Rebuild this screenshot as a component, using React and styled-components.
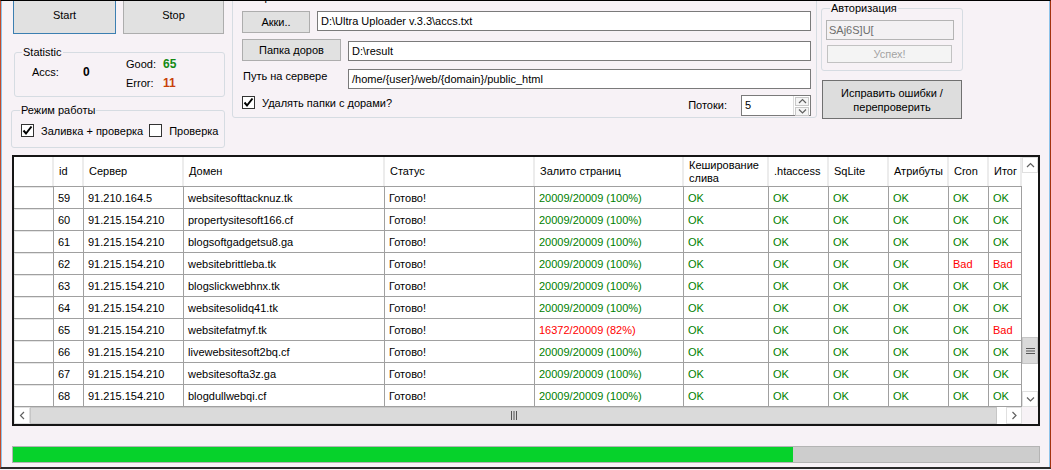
import React from "react"
import styled, { createGlobalStyle } from "styled-components"

const BG = "#f7f2f6"
const GRID_LINE = "#a0a0a0"

const GlobalStyle = createGlobalStyle`
  html, body {
    margin: 0;
    padding: 0;
    background: ${BG};
    overflow: hidden;
  }
  body {
    font-family: "Liberation Sans", Arial, sans-serif;
    font-size: 11px;
    color: #000;
  }
  * {
    box-sizing: border-box;
  }
`

const columns = [
  { key: "rh", title: "", width: 40 },
  { key: "id", title: "id", width: 30 },
  { key: "server", title: "Сервер", width: 100 },
  { key: "domain", title: "Домен", width: 201 },
  { key: "status", title: "Статус", width: 150 },
  { key: "pages", title: "Залито страниц", width: 149 },
  { key: "cache", title: "Кеширование слива", width: 85 },
  { key: "htaccess", title: ".htaccess", width: 60 },
  { key: "sqlite", title: "SqLite", width: 60 },
  { key: "attrs", title: "Атрибуты", width: 60 },
  { key: "cron", title: "Cron", width: 40 },
  { key: "total", title: "Итог", width: 33 },
]

const template = columns.map((c) => `${c.width}px`).join(" ")

const rows = [
  { id: "59", server: "91.210.164.5", domain: "websitesofttacknuz.tk" },
  { id: "60", server: "91.215.154.210", domain: "propertysitesoft166.cf" },
  { id: "61", server: "91.215.154.210", domain: "blogsoftgadgetsu8.ga" },
  { id: "62", server: "91.215.154.210", domain: "websitebrittleba.tk", cron: false, total: false },
  { id: "63", server: "91.215.154.210", domain: "blogslickwebhnx.tk" },
  { id: "64", server: "91.215.154.210", domain: "websitesolidq41.tk" },
  { id: "65", server: "91.215.154.210", domain: "websitefatmyf.tk", pages: 16372, total: false },
  { id: "66", server: "91.215.154.210", domain: "livewebsitesoft2bq.cf" },
  { id: "67", server: "91.215.154.210", domain: "websitesofta3z.ga" },
  { id: "68", server: "91.215.154.210", domain: "blogdullwebqi.cf" },
]

const PAGES_TOTAL = 20009
const progress = 76

export default function App() {
  return (
    <>
      <GlobalStyle />
      <Frame>
        <Window>
          <TopArea>
            <LeftCol>
              <ButtonRow>
                <Button $w={103} $h={38} $focused>Start</Button>
                <Button $w={101} $h={38}>Stop</Button>
              </ButtonRow>
              <StatGroup>
                <Legend $left={7}>Statistic</Legend>
                <StatGrid>
                  <AccsLabel>Accs:</AccsLabel>
                  <AccsValue>0</AccsValue>
                  <span>Good:</span>
                  <Num $color="#138a13">65</Num>
                  <span>Error:</span>
                  <Num $color="#c8400a">11</Num>
                </StatGrid>
              </StatGroup>
              <ModeGroup>
                <Legend $left={8}>Режим работы</Legend>
                <ModeRow>
                  <Check checked label="Заливка + проверка" />
                  <Check label="Проверка" />
                </ModeRow>
              </ModeGroup>
            </LeftCol>

            <SettingsGroup>
              <Legend $left={6}>Настройки</Legend>
              <FieldRow $h={22}>
                <Button $w={68} $h={22}>Акки..</Button>
                <TextBox $gap={7} $h={20}>D:\Ultra Uploader v.3.3\accs.txt</TextBox>
              </FieldRow>
              <FieldRow $h={22} $mt={6}>
                <Button $w={99} $h={22}>Папка доров</Button>
                <TextBox $gap={7} $h={20} $mt={2}>D:\result</TextBox>
              </FieldRow>
              <FieldRow $h={20} $mt={8}>
                <FieldLabel>Путь на сервере</FieldLabel>
                <TextBox $h={20}>/home/{"{user}"}/web/{"{domain}"}/public_html</TextBox>
              </FieldRow>
              <FieldRow $h={21} $mt={6}>
                <CheckSlot>
                  <Check checked label="Удалять папки с дорами?" />
                </CheckSlot>
                <ThreadsLabel>Потоки:</ThreadsLabel>
                <Spin>
                  <SpinValue>5</SpinValue>
                  <SpinButtons>
                    <SpinBtn>
                      <Chevron dir="up" />
                    </SpinBtn>
                    <SpinBtn>
                      <Chevron dir="down" />
                    </SpinBtn>
                  </SpinButtons>
                </Spin>
              </FieldRow>
            </SettingsGroup>

            <RightCol>
              <AuthGroup>
                <Legend $left={8}>Авторизация</Legend>
                <AuthBox>SAj6S]U[</AuthBox>
                <Button $w={125} $h={18} $disabled>Успех!</Button>
              </AuthGroup>
              <FixButton>
                Исправить ошибки /
                <br />
                перепроверить
              </FixButton>
            </RightCol>
          </TopArea>

          <Table>
            <TableBody>
              <Grid>
                <HeaderRow>
                  {columns.map((c) => (
                    <HeaderCell key={c.key}>{c.title}</HeaderCell>
                  ))}
                </HeaderRow>
                {rows.map((r) => {
                  const pages = r.pages ?? PAGES_TOTAL
                  const pct = Math.round((pages / PAGES_TOTAL) * 100)
                  const flag = (v) => (v === false ? "bad" : "ok")
                  return (
                    <DataRow key={r.id}>
                      <RowHead />
                      <Cell>{r.id}</Cell>
                      <Cell>{r.server}</Cell>
                      <Cell>{r.domain}</Cell>
                      <Cell>Готово!</Cell>
                      <Cell $tone={pct < 100 ? "bad" : "ok"}>
                        {pages}/{PAGES_TOTAL} ({pct}%)
                      </Cell>
                      <Cell $tone="ok">OK</Cell>
                      <Cell $tone="ok">OK</Cell>
                      <Cell $tone="ok">OK</Cell>
                      <Cell $tone="ok">OK</Cell>
                      <Cell $tone={flag(r.cron)}>{r.cron === false ? "Bad" : "OK"}</Cell>
                      <Cell $tone={flag(r.total)}>{r.total === false ? "Bad" : "OK"}</Cell>
                    </DataRow>
                  )
                })}
              </Grid>
              <VScroll>
                <ScrollBtn>
                  <Chevron dir="up" />
                </ScrollBtn>
                <VTrack>
                  <VThumb>
                    <svg width="9" height="8" viewBox="0 0 9 8">
                      <path d="M0 1.5h9M0 4h9M0 6.5h9" stroke="#555" strokeWidth="1" />
                    </svg>
                  </VThumb>
                </VTrack>
                <ScrollBtn>
                  <Chevron dir="down" />
                </ScrollBtn>
              </VScroll>
            </TableBody>
            <HScroll>
              <ScrollBtn $wide>
                <Chevron dir="left" />
              </ScrollBtn>
              <HThumb>
                <svg width="8" height="9" viewBox="0 0 8 9">
                  <path d="M1.5 0v9M4 0v9M6.5 0v9" stroke="#555" strokeWidth="1" />
                </svg>
              </HThumb>
              <HTrack />
              <ScrollBtn $wide>
                <Chevron dir="right" />
              </ScrollBtn>
              <Corner />
            </HScroll>
          </Table>

          <Progress>
            <ProgressFill style={{ width: `${progress}%` }} />
          </Progress>
        </Window>
      </Frame>
    </>
  )
}

function Check({ checked, label }) {
  return (
    <CheckItem>
      <CheckBox>
        {checked && (
          <svg width="11" height="11" viewBox="0 0 11 11">
            <path d="M1.5 5.5 L4 8.5 L9.5 1.5" fill="none" stroke="#000" strokeWidth="2" />
          </svg>
        )}
      </CheckBox>
      <CheckLabel>{label}</CheckLabel>
    </CheckItem>
  )
}

function Chevron({ dir }) {
  const paths = {
    up: "M1 5 L4.5 1.5 L8 5",
    down: "M1 1.5 L4.5 5 L8 1.5",
    left: "M5 1 L1.5 4.5 L5 8",
    right: "M1.5 1 L5 4.5 L1.5 8",
  }
  const vertical = dir === "up" || dir === "down"
  return (
    <svg
      width={vertical ? 9 : 7}
      height={vertical ? 7 : 9}
      viewBox={vertical ? "0 0 9 7" : "0 0 7 9"}
    >
      <path d={paths[dir]} fill="none" stroke="#606060" strokeWidth="1.2" />
    </svg>
  )
}

const Frame = styled.div`
  width: 1051px;
  height: 469px;
  border-top: 1px solid #000;
  border-left: 1px solid #c44b2a;
  border-right: 1px solid #a3320f;
  border-bottom: 2px solid #2b2b2b;
`

const Window = styled.div`
  height: 100%;
  display: flex;
  flex-direction: column;
  overflow: hidden;
  background: ${BG};
  border-left: 1px solid #8ec3ea;
  border-right: 1px solid #8ec3ea;
`

const TopArea = styled.div`
  display: flex;
  align-items: flex-start;
`

const LeftCol = styled.div`
  width: 214px;
  margin-left: 9px;
  display: flex;
  flex-direction: column;
`

const ButtonRow = styled.div`
  display: flex;
  gap: 7px;
  padding-left: 2px;
  margin-top: -5px;
`

const Button = styled.button`
  width: ${(p) => p.$w}px;
  height: ${(p) => p.$h}px;
  flex: none;
  padding: 0;
  font: inherit;
  color: ${(p) => (p.$disabled ? "#a3a3a3" : "#000")};
  background: ${(p) => (p.$disabled ? "#f4f4f4" : "#e1e1e1")};
  border: 1px solid
    ${(p) => (p.$focused ? "#3c7fb1" : p.$disabled ? "#c2c2c2" : "#adadad")};
  margin-left: ${(p) => (p.$disabled ? 1 : 0)}px;
  margin-top: ${(p) => (p.$disabled ? 5 : 0)}px;
`

const Group = styled.div`
  position: relative;
  border: 1px solid #d6dce2;
  border-radius: 3px;
`

const Legend = styled.span`
  position: absolute;
  top: -7px;
  left: ${(p) => p.$left}px;
  padding: 0 1px;
  line-height: 12px;
  background: ${BG};
  white-space: nowrap;
`

const StatGroup = styled(Group)`
  width: 211px;
  height: 45px;
  margin: 18px 0 0 3px;
`

const StatGrid = styled.div`
  display: grid;
  grid-template-columns: 51px 43px 37px auto;
  grid-template-rows: 19px 19px;
  align-items: center;
  padding: 1px 0 0 17px;
`

const AccsLabel = styled.span`
  grid-row: 1 / span 2;
  margin-bottom: 3px;
`

const Num = styled.span`
  font-weight: bold;
  font-size: 12px;
  color: ${(p) => p.$color};
`

const AccsValue = styled(Num)`
  grid-row: 1 / span 2;
  margin-bottom: 3px;
`

const ModeGroup = styled(Group)`
  width: 214px;
  height: 38px;
  margin-top: 13px;
  padding: 13px 0 0 9px;
`

const ModeRow = styled.div`
  display: flex;
  gap: 4px;
`

const CheckItem = styled.label`
  display: flex;
  align-items: center;
  height: 13px;
`

const CheckBox = styled.span`
  width: 13px;
  height: 13px;
  flex: none;
  display: grid;
  place-items: center;
  background: #fff;
  border: 1px solid #333;
`

const CheckLabel = styled.span`
  margin-left: 7px;
  margin-right: 2px;
  white-space: nowrap;
`

const SettingsGroup = styled(Group)`
  width: 585px;
  height: 121px;
  margin: -4px 0 0 7px;
  padding: 13px 5px 0 9px;
`

const FieldRow = styled.div`
  display: flex;
  align-items: flex-start;
  height: ${(p) => p.$h}px;
  margin-top: ${(p) => p.$mt || 0}px;
`

const TextBox = styled.div`
  flex: 1;
  height: ${(p) => p.$h}px;
  margin-left: ${(p) => p.$gap || 0}px;
  margin-top: ${(p) => p.$mt || 0}px;
  padding-left: 3px;
  line-height: 18px;
  background: #fff;
  border: 1px solid #7a7a7a;
  white-space: nowrap;
`

const FieldLabel = styled.span`
  width: 106px;
  margin-top: 1px;
  padding-left: 1px;
  line-height: 13px;
`

const CheckSlot = styled.div`
  margin-top: 1px;
  flex: 1;
`

const ThreadsLabel = styled.span`
  margin-top: 4px;
  margin-right: 14px;
  line-height: 13px;
`

const Spin = styled.div`
  width: 70px;
  height: 21px;
  display: flex;
  background: #fff;
  border: 1px solid #7a7a7a;
`

const SpinValue = styled.span`
  flex: 1;
  padding-left: 3px;
  line-height: 18px;
`

const SpinButtons = styled.div`
  width: 17px;
  display: flex;
  flex-direction: column;
  border-left: 1px solid #dcdcdc;
`

const SpinBtn = styled.div`
  flex: 1;
  display: grid;
  place-items: center;
  background: #f5f5f5;
  border: 1px solid #c8c8c8;
  margin: 1px 1px 0 1px;
`

const RightCol = styled.div`
  width: 142px;
  margin: 7px 0 0 4px;
  display: flex;
  flex-direction: column;
`

const AuthGroup = styled(Group)`
  width: 142px;
  height: 63px;
  padding: 11px 0 0 4px;
`

const AuthBox = styled.div`
  width: 128px;
  height: 20px;
  padding-left: 2px;
  line-height: 18px;
  color: #6d6d6d;
  background: #f3f1f3;
  border: 1px solid #b4b4b4;
`

const FixButton = styled.button`
  width: 140px;
  height: 39px;
  margin: 9px 0 0 1px;
  padding: 0;
  font: inherit;
  line-height: 14px;
  color: #000;
  background: #dddddd;
  border: 1px solid #707070;
`

const Table = styled.div`
  width: 1028px;
  height: 271px;
  margin: 7px 0 0 10px;
  display: flex;
  flex-direction: column;
  background: #fff;
  border: 2px solid #151515;
`

const TableBody = styled.div`
  display: flex;
  height: 250px;
`

const Grid = styled.div`
  width: 1008px;
  overflow: hidden;
`

const HeaderRow = styled.div`
  display: grid;
  grid-template-columns: ${template};
  height: 30px;
  border-bottom: 1px solid ${GRID_LINE};
`

const HeaderCell = styled.div`
  display: flex;
  align-items: center;
  padding-left: 5px;
  line-height: 13px;
  overflow: hidden;
  background: #fff;
  border-right: 2px solid #ececec;
`

const DataRow = styled.div`
  display: grid;
  grid-template-columns: ${template};
  height: 22px;
`

const Cell = styled.div`
  display: flex;
  align-items: center;
  padding-left: 4px;
  white-space: nowrap;
  overflow: hidden;
  color: ${(p) => (p.$tone === "ok" ? "#008000" : p.$tone === "bad" ? "#ff0000" : "#000")};
  border-right: 1px solid ${GRID_LINE};
  border-bottom: 1px solid ${GRID_LINE};
`

const RowHead = styled(Cell)`
  box-shadow: inset 1px 1px 0 #e6e6e6;
`

const VScroll = styled.div`
  width: 16px;
  display: flex;
  flex-direction: column;
  background: #fff;
`

const ScrollBtn = styled.div`
  width: 16px;
  height: ${(p) => (p.$wide ? 17 : 16)}px;
  flex: none;
  display: grid;
  place-items: center;
  background: #fff;
  border: 1px solid #e0e0e0;
`

const VTrack = styled.div`
  flex: 1;
  padding-top: 164px;
`

const VThumb = styled.div`
  height: 27px;
  display: grid;
  place-items: center;
  background: #dadada;
  border: 1px solid #c6c6c6;
`

const HScroll = styled.div`
  display: flex;
  height: 17px;
`

const HThumb = styled.div`
  width: 967px;
  display: grid;
  place-items: center;
  background: #dadada;
  border: 1px solid #c6c6c6;
`

const HTrack = styled.div`
  flex: 1;
  background: #fff;
`

const Corner = styled.div`
  width: 16px;
  background: ${BG};
`

const Progress = styled.div`
  width: 1028px;
  height: 17px;
  margin: 20px 0 0 10px;
  background: #cdcdcd;
  border: 1px solid #b4b4b4;
`

const ProgressFill = styled.div`
  height: 100%;
  background: #06d22b;
`
